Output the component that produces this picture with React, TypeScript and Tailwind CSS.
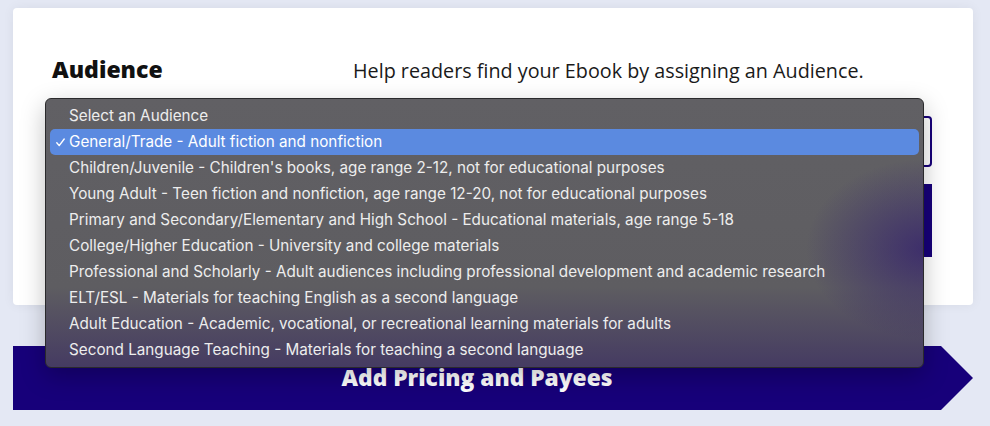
import React from 'react';

const options = [
  'Select an Audience',
  'General/Trade - Adult fiction and nonfiction',
  "Children/Juvenile - Children's books, age range 2-12, not for educational purposes",
  'Young Adult - Teen fiction and nonfiction, age range 12-20, not for educational purposes',
  'Primary and Secondary/Elementary and High School - Educational materials, age range 5-18',
  'College/Higher Education - University and college materials',
  'Professional and Scholarly - Adult audiences including professional development and academic research',
  'ELT/ESL - Materials for teaching English as a second language',
  'Adult Education - Academic, vocational, or recreational learning materials for adults',
  'Second Language Teaching - Materials for teaching a second language',
];

const selected = 1;

export default function App() {
  return (
    <div className="relative h-[426px] w-[990px] overflow-hidden bg-[#e4e8f4] pt-2 pl-[13px] font-['Open_Sans',sans-serif]">
      {/* form card */}
      <section className="h-[297px] w-[960px] rounded-sm bg-white pl-[39px] pr-[41px] pt-[47px] shadow-[0_0_12px_rgba(0,0,0,0.06)]">
        <div className="flex items-baseline leading-[28px]">
          <h2 className="w-[301px] text-[23px] font-extrabold text-[#111]">Audience</h2>
          <p className="text-[19.75px] text-[#1a1a1a]">Help readers find your Ebook by assigning an Audience.</p>
        </div>
        <div className="mt-[31px] h-[51px] w-full rounded-sm border-2 border-[#17007a]" />
        <div className="mt-[17px] h-[73px] w-full bg-[#17007a]" />
      </section>

      {/* next step */}
      <div className="mt-[41px] flex h-16 w-[960px]">
        <div className="flex flex-1 items-center justify-center bg-[#17007a]">
          <span className="text-[22.75px] font-extrabold text-white">Add Pricing and Payees</span>
        </div>
        <svg width="32" height="64" viewBox="0 0 32 64" className="block">
          <polygon points="0,0 32,32 0,64" fill="#17007a" />
        </svg>
      </div>

      {/* native select popup */}
      <div className="absolute left-[45px] top-[98px] w-[879px] overflow-hidden rounded-md border border-[#2a2a2c] bg-[linear-gradient(180deg,#616064_0%,#5e5d61_70%,#453b62_100%)] px-[4px] pt-[4px] pb-[4px] shadow-[0_8px_24px_rgba(0,0,0,0.25)] font-['Inter',sans-serif]">
        <div className="pointer-events-none absolute left-[760px] top-[60px] h-[180px] w-[240px] rounded-full bg-[radial-gradient(closest-side,rgba(50,30,110,0.75),rgba(50,30,110,0))]" />
        <ul className="relative">
          {options.map((o, i) => (
            <li
              key={o}
              className={`flex h-[26px] items-center rounded-[5px] text-[15.25px] ${
                i === selected ? 'bg-[#5b8ae0] text-white' : 'text-[#ededed]'
              }`}
            >
              <span className="flex w-[19px] items-center pl-[6px]">
                {i === selected && (
                  <svg width="9" height="9" viewBox="0 0 9 9" fill="none">
                    <path d="M0.8 4.8 L3.2 7.6 L8.2 1" stroke="white" strokeWidth="1.4" strokeLinecap="round" strokeLinejoin="round" />
                  </svg>
                )}
              </span>
              <span>{o}</span>
            </li>
          ))}
        </ul>
      </div>
    </div>
  );
}
